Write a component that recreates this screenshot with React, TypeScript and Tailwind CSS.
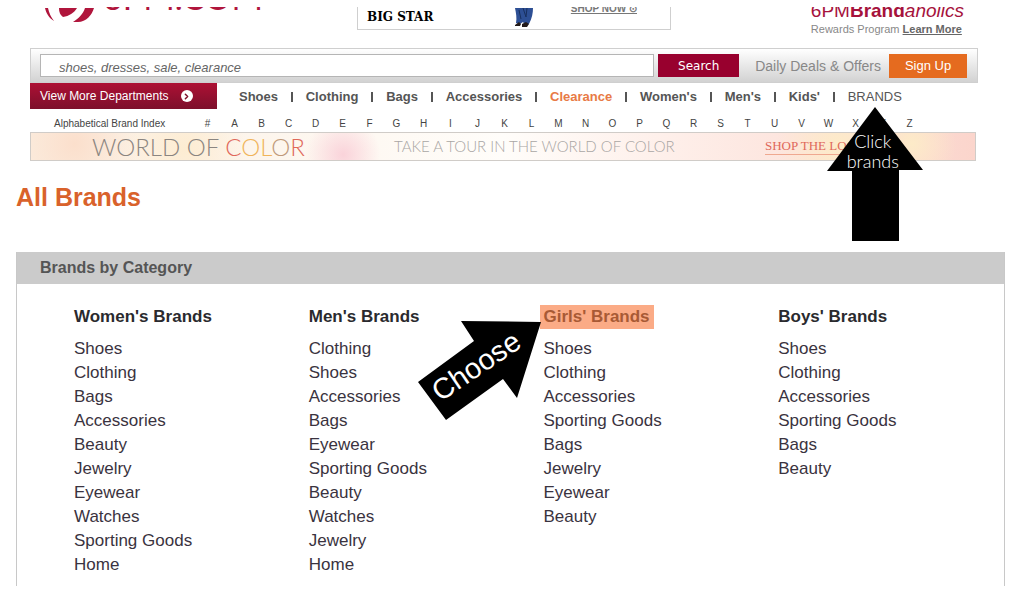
import { ChevronRight } from "lucide-react";

const DEPARTMENTS = [
  "Shoes",
  "Clothing",
  "Bags",
  "Accessories",
  "Clearance",
  "Women's",
  "Men's",
  "Kids'",
];

const LETTERS = "#ABCDEFGHIJKLMNOPQRSTUVWXYZ".split("");

const CATEGORIES: { title: string; highlighted?: boolean; links: string[] }[] = [
  {
    title: "Women's Brands",
    links: [
      "Shoes",
      "Clothing",
      "Bags",
      "Accessories",
      "Beauty",
      "Jewelry",
      "Eyewear",
      "Watches",
      "Sporting Goods",
      "Home",
    ],
  },
  {
    title: "Men's Brands",
    links: [
      "Clothing",
      "Shoes",
      "Accessories",
      "Bags",
      "Eyewear",
      "Sporting Goods",
      "Beauty",
      "Watches",
      "Jewelry",
      "Home",
    ],
  },
  {
    title: "Girls' Brands",
    highlighted: true,
    links: [
      "Shoes",
      "Clothing",
      "Accessories",
      "Sporting Goods",
      "Bags",
      "Jewelry",
      "Eyewear",
      "Beauty",
    ],
  },
  {
    title: "Boys' Brands",
    links: ["Shoes", "Clothing", "Accessories", "Sporting Goods", "Bags", "Beauty"],
  },
];

function Logo() {
  return (
    <a href="#" className="flex items-end gap-2 text-[#b0153c]">
      <svg width="50" height="15" viewBox="0 0 50 15" aria-hidden="true">
        <path d="M0 1h3c1 5 3 9 6 13C4 11 1 6 0 1z" fill="currentColor" />
        <path d="M14 1h18c-3 5-8 8-14 9-3-2-4-5-4-9z" fill="currentColor" />
        <path d="M40 1h9c-2 7-8 14-16 14h-5c6-4 10-8 12-14z" fill="currentColor" />
      </svg>
      <span className="mb-[9px] font-[Lato] text-[34px] leading-8">6PM.COM</span>
    </a>
  );
}

function Jeans() {
  return (
    <svg width="20" height="19" viewBox="0 0 20 19" aria-hidden="true">
      <path d="M1 0h18c0 5-1 10-4 16l-4 1-2-3-3 2-4-1C3 10 2 5 1 0z" fill="#2d4f94" />
      <path d="M9 0l3 9 1-9M5 2l2 9" stroke="#18305f" fill="none" />
      <path d="M1 17l4-3 2 2-1 2H1zM8 16l4-2 3 2-2 3H8z" fill="#221a1a" />
    </svg>
  );
}

function ClickArrow() {
  return (
    <div className="pointer-events-none absolute top-5 left-1/2 z-10 h-[135px] w-24 -translate-x-1/2">
      <svg className="absolute inset-0" width="96" height="135" viewBox="0 0 96 135" aria-hidden="true">
        <path d="M48 0L96 63H72v71H25V64H0z" fill="#000" />
      </svg>
      <p className="relative pt-6 pr-1 text-center font-[Lato] text-lg leading-5 font-light text-white">
        Click
        <br />
        brands
      </p>
    </div>
  );
}

function ChooseArrow() {
  return (
    <div className="pointer-events-none absolute top-4 right-full z-10 mr-0.5 h-[100px] w-[124px]">
      <svg className="absolute inset-0" width="124" height="100" viewBox="0 0 124 100" aria-hidden="true">
        <path d="M123 1L43 0l13 20L0 61l28 38 57-41 14 19z" fill="#000" />
      </svg>
      <div className="relative flex h-[90px] w-[116px] items-center justify-center">
        <span className="-rotate-[34deg] text-[29px] text-white">Choose</span>
      </div>
    </div>
  );
}

function Banner() {
  return (
    <a
      href="#"
      className="mr-0.5 flex h-[29px] items-center border border-[#d0ccc8] bg-linear-to-r from-[#fbeee0] via-[#fffdfa] to-[#fbd5cc] font-[Lato] font-light"
    >
      <span className="flex h-full w-[363px] items-center bg-[radial-gradient(circle_at_86%_80%,#fad3da_0,transparent_12%),radial-gradient(circle_at_42%_60%,#fdecd2_0,transparent_30%),radial-gradient(circle_at_12%_40%,#fbdfcc_0,transparent_20%)] pl-[61px] text-2xl text-[#8b8580]">
        <span>
          WORLD OF <span className="text-[#e0685a]">C</span>
          <span className="text-[#f0b45a]">OL</span>
          <span className="text-[#c09a7a]">O</span>
          <span className="text-[#e0685a]">R</span>
        </span>
      </span>
      <span className="w-[371px] text-[15px] text-[#a9a6a4]">TAKE A TOUR IN THE WORLD OF COLOR</span>
      <span className="flex h-full flex-1 items-center bg-[radial-gradient(circle_at_35%_50%,#fdebc8_0,transparent_45%),radial-gradient(circle_at_70%_40%,#fdebc8_0,transparent_30%)] font-['Liberation_Serif'] text-[13px] font-normal text-[#e0685a]">
        <span className="border-b border-[#efa890] leading-4">SHOP THE LOOK</span>
      </span>
    </a>
  );
}

export default function App() {
  return (
    <div className="bg-white pt-[7px] font-['Liberation_Sans',sans-serif]">
      <div className="mr-[46px] ml-[30px]">
        <header className="flex h-[41px] items-start overflow-hidden pr-3.5">
          <div className="flex h-[15px] w-[327px] items-end pl-[15px]">
            <Logo />
          </div>
          <div className="flex h-[23px] w-[314px] items-end border border-t-0 border-[#cfcfcf] px-[9px] pb-0.5">
            <b className="w-[147px] font-['DejaVu_Serif'] text-xs leading-5 font-bold text-black">
              BIG STAR
            </b>
            <Jeans />
            <a href="#" className="mr-6 mb-3 ml-auto text-[10px] leading-3 font-bold text-[#777] underline">
              SHOP NOW ⊙
            </a>
          </div>
          <div className="ml-auto flex h-[30px] flex-col justify-end text-[#888]">
            <p className="text-[19px] leading-5 text-[#a6123c]">
              6PM<b>Brand</b>
              <i>aholics</i>
            </p>
            <p className="text-[11px] leading-4">
              Rewards Program{" "}
              <a href="#" className="font-bold text-[#666] underline">
                Learn More
              </a>
            </p>
          </div>
        </header>

        <form className="flex h-[35px] items-center border border-[#cfcfcf] bg-linear-to-b from-white to-[#d2d2d2] pr-2.5 pl-[9px]">
          <input
            type="search"
            aria-label="Search"
            placeholder="shoes, dresses, sale, clearance"
            className="h-[23px] min-w-0 flex-1 border border-[#b5b5b5] bg-white px-[18px] pt-1 text-[13px] italic placeholder:text-[#666]"
          />
          <button
            type="button"
            className="ml-1 h-[23px] w-[81px] bg-[#98002e] font-['DejaVu_Sans'] text-xs text-white"
          >
            Search
          </button>
          <a href="#" className="mr-2 ml-4 text-sm text-[#888]">
            Daily Deals &amp; Offers
          </a>
          <button type="button" className="h-6 w-[78px] bg-[#e56b1f] text-[13px] text-white">
            Sign Up
          </button>
        </form>

        <nav className="flex h-[26px] items-center">
          <button
            type="button"
            className="flex h-full w-[187px] items-center gap-3 bg-linear-to-b from-[#ad1034] to-[#7d0f2b] pl-2.5 text-xs text-white"
          >
            View More Departments
            <span className="flex size-3 items-center justify-center rounded-full bg-white text-[#7d0f2b]">
              <ChevronRight size={9} strokeWidth={4} />
            </span>
          </button>
          <ul className="mr-[76px] ml-[22px] flex flex-1 items-center justify-between pt-0.5 text-[13px] font-bold text-[#555]">
            {DEPARTMENTS.map((name) => (
              <li key={name} className="contents">
                <a href="#" className={name === "Clearance" ? "text-[#e87a45]" : undefined}>
                  {name}
                </a>
                <span className="h-2.5 w-0.5 bg-[#555]" />
              </li>
            ))}
            <li className="relative">
              <a href="#" className="font-normal">
                BRANDS
              </a>
              <ClickArrow />
            </li>
          </ul>
        </nav>

        <div className="flex h-[23px] items-center pt-1.5 text-[10px] text-[#444]">
          <span className="w-[164px] pl-6">Alphabetical Brand Index</span>
          <ul className="mr-[55px] flex flex-1">
            {LETTERS.map((letter) => (
              <li key={letter} className="flex-1 text-center">
                <a href="#">{letter}</a>
              </li>
            ))}
          </ul>
        </div>

        <Banner />
      </div>

      <main className="mr-[19px] ml-4">
        <h1 className="pt-5 text-[25px] leading-8 font-bold text-[#d9622b]">All Brands</h1>

        <section className="mt-[39px] border-x border-[#c8c8c8] pb-[9px]">
          <h2 className="bg-[#cbcbcb] pl-[23px] text-base leading-8 font-bold text-[#555]">
            Brands by Category
          </h2>
          <div className="grid grid-cols-4 gap-[9px] pt-[21px] pl-[57px] text-[17px] leading-6 text-[#3a3340]">
            {CATEGORIES.map(({ title, highlighted, links }) => (
              <div key={title} className="relative">
                <h3 className="mb-2 font-bold text-[#2a2a2e]">
                  {highlighted ? (
                    <span className="-ml-1 inline-block bg-[#fbab86] px-1 text-[#a85a35]">{title}</span>
                  ) : (
                    title
                  )}
                </h3>
                {highlighted ? <ChooseArrow /> : null}
                <ul>
                  {links.map((link) => (
                    <li key={link}>
                      <a href="#">{link}</a>
                    </li>
                  ))}
                </ul>
              </div>
            ))}
          </div>
        </section>
      </main>
    </div>
  );
}
